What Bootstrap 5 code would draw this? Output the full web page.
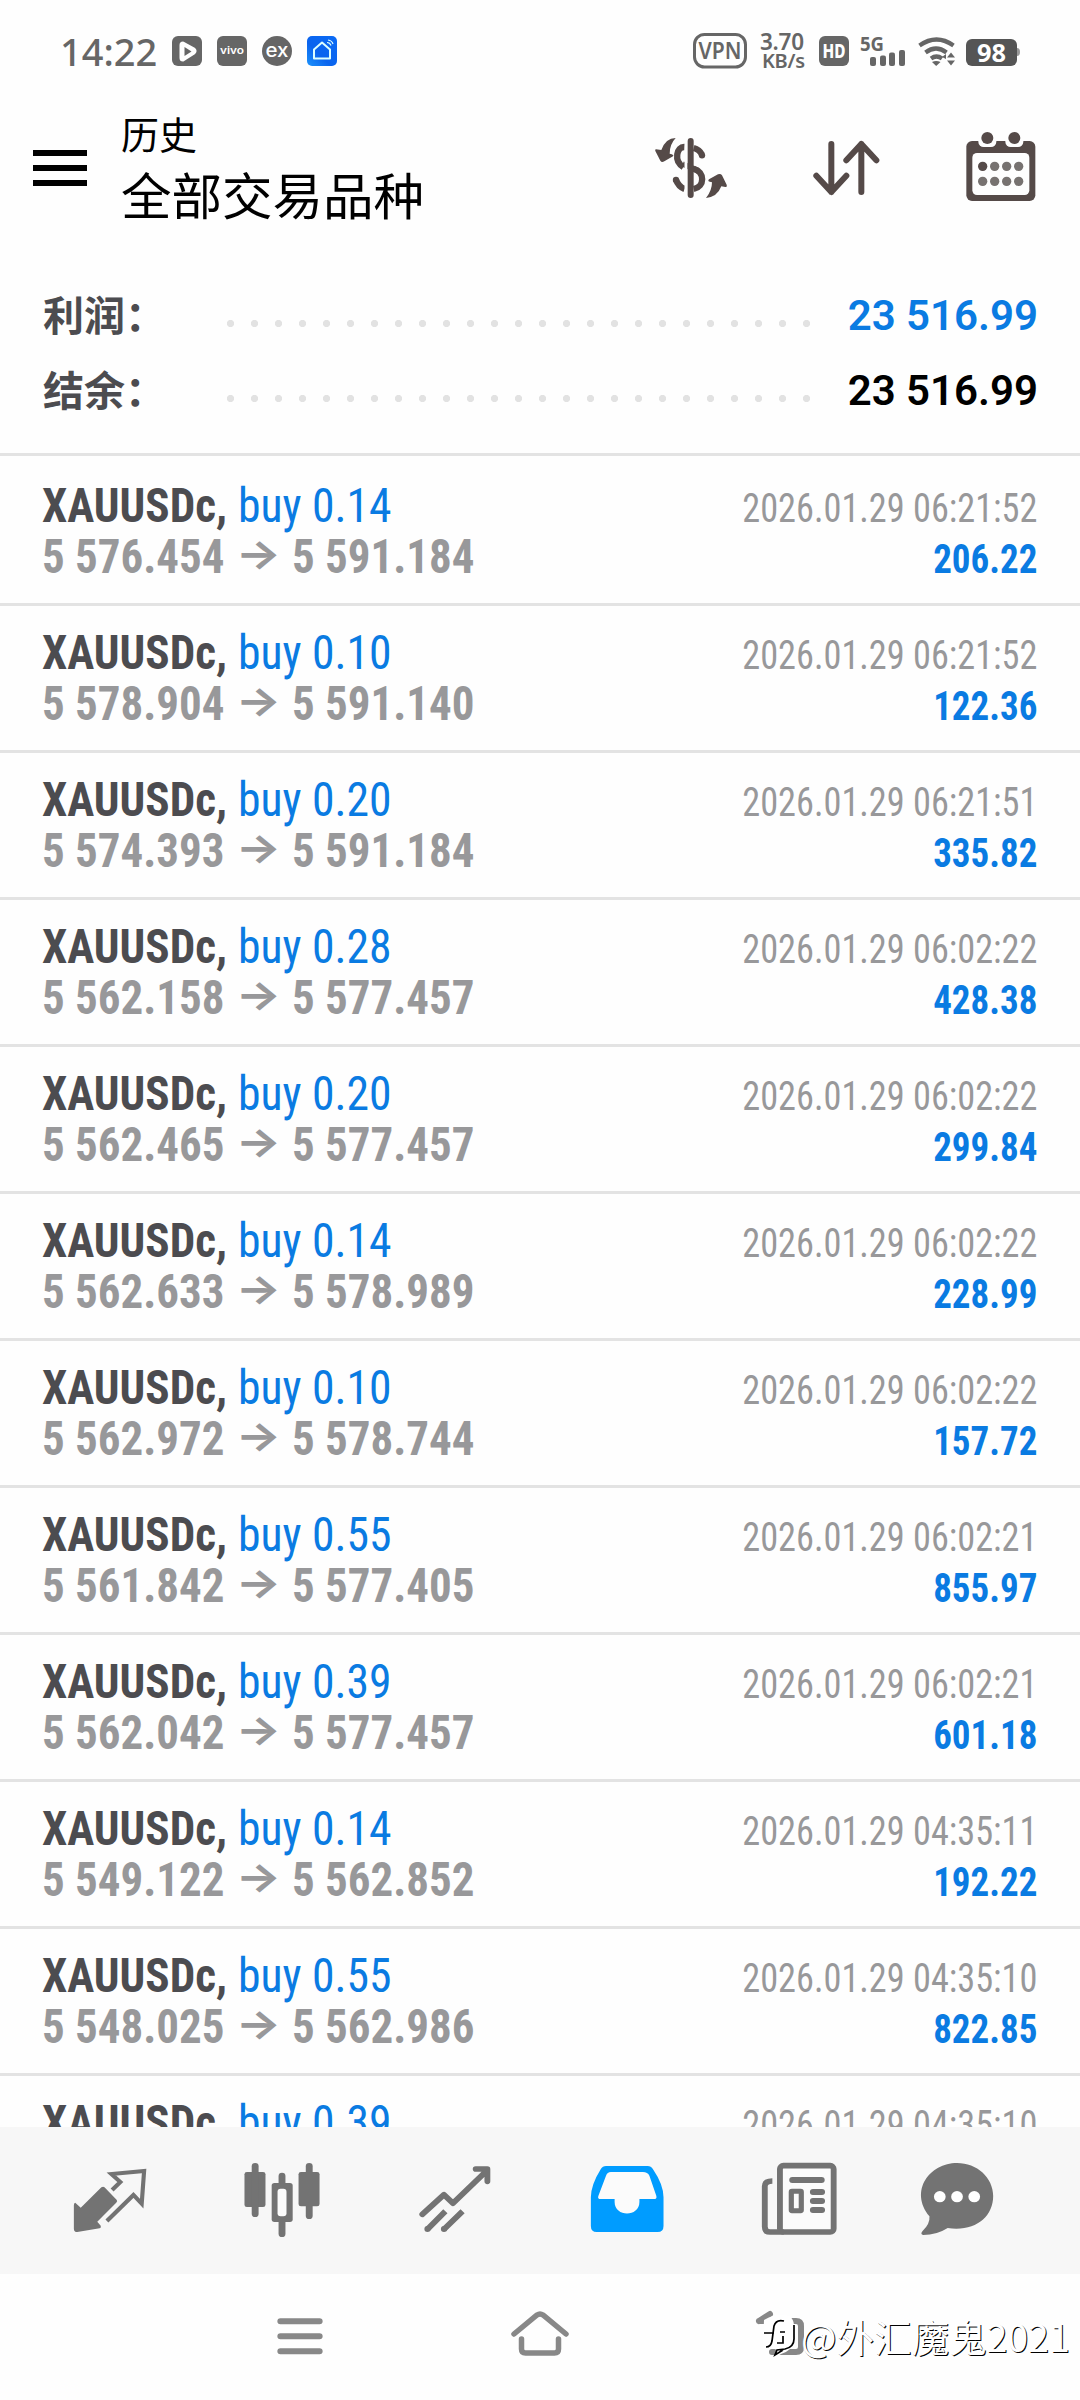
<!DOCTYPE html>
<html lang="zh-CN">
<head>
<meta charset="utf-8">
<meta name="viewport" content="width=device-width, initial-scale=1">
<title>历史</title>
<link rel="stylesheet" href="https://cdn.jsdelivr.net/npm/bootstrap@5.3.0/dist/css/bootstrap.min.css">
<style>
body{width:1080px;height:2400px;overflow:hidden;background:#fefefe;font-family:Roboto,"Noto Sans CJK SC",sans-serif;color:#000}
svg{display:block;flex:none;overflow:visible}
.statusbar{height:100px;padding:2px 60px 0 60px;color:#666}
.clock{font:500 38px/1 "Noto Sans",sans-serif;width:97px;margin-right:15px}
.apphead{height:154px;padding:10px 44px 0 33px}
.burger{width:54px;height:36px;padding:0;border:0;background:none;margin-top:40px}
.burger i{display:block;height:6px;background:#000}
.titles{padding-left:34px}
.t1{font-size:38px;line-height:46px;margin-top:3px}
.t2{font-size:50.5px;line-height:60px;margin-top:9px}
.headicons{gap:86px;padding-top:22px}
.totals{height:202px;padding:24px 42px 0 43px;border-bottom:3px solid #e3e3e3}
.trow{height:75px}
.tlabel{width:184px;font-size:41px;font-weight:700;line-height:75px;color:#4c4c50;padding-top:4px}
.dots{width:584px;height:7px;margin-top:15px;background:radial-gradient(circle at 3.5px 3.5px,#e2e2e2 3.3px,transparent 3.9px) 0 0/24px 7px repeat-x}
.tval{font-size:42px;font-weight:600;line-height:75px}
.deals{height:1671px;padding-top:3px;overflow:hidden}
.deal{height:147px;padding:21px 43px 0 42px;border-bottom:3px solid #e3e3e3;line-height:51px;font-family:"Roboto Condensed",Roboto,sans-serif;font-stretch:75%;white-space:nowrap}
.deal>div>div{height:51px;display:flex}
.deal>div:first-child{font-size:48px}
.deal>div:last-child{font-size:40px;padding-top:3px}
.deal>div:last-child>div{justify-content:flex-end;transform-origin:100% 0}
.sym{font-weight:700;color:#4c4c50;width:196px;transform:scaleX(.94);transform-origin:0 0}
.side,.dval,.tval.up{color:#0a7be2}
.side{transform:scaleX(.95);transform-origin:0 0}
.px{font-weight:700;color:#98989a;transform:scaleX(.937);transform-origin:0 0}
.px i{font:700 40px/46px Inter,sans-serif;width:72px;text-align:center;transform:scaleX(1.28)}
.when{color:#98989a;transform:scaleX(.907)}
.dval{font-weight:700;transform:scaleX(.925)}
.tabs{height:147px;background:#f7f7f7;padding:0 0 2px 72px;gap:96.3px;color:#737373}
.tabs svg:last-child{margin-left:-14px}
.sysnav{height:126px;position:relative;color:#888;padding:0 276px 6px 277px}
.wm{position:absolute;left:760px;top:37px;color:#fff;font:400 37.5px/50px "Noto Sans CJK SC",sans-serif;text-shadow:1px 1px 0 #000;white-space:nowrap}
</style>
<script src="https://cdn.jsdelivr.net/npm/bootstrap@5.3.0/dist/js/bootstrap.bundle.min.js"></script>
</head>
<body>
<div class="statusbar d-flex align-items-center">
  <span class="clock">14:22</span>
  <svg width="165" height="30" viewBox="0 0 165 30"><defs><linearGradient id="hb" x1="0" y1="1" x2="1" y2="0"><stop offset="0" stop-color="#1d93fb"/><stop offset=".4" stop-color="#0a64ee"/><stop offset="1" stop-color="#0a6af5"/></linearGradient></defs>
    <rect width="30" height="30" rx="6" fill="#666"/><path d="M9 9q0-2 2-2l11 6q2 2 0 4l-11 7q-2 0-2-2z" fill="#fff" stroke="#fff" stroke-width="3" stroke-linejoin="round"/><path d="M12.500 11v9l7-4.500z" fill="#666"/>
    <rect x="45" width="30" height="30" rx="6" fill="#666"/><text x="60" y="18" text-anchor="middle" font-family="Inter" font-size="10" font-weight="600" fill="#fff" textLength="24" lengthAdjust="spacingAndGlyphs">vivo</text>
    <circle cx="105" cy="15" r="15" fill="#666"/><text x="105" y="20.500" text-anchor="middle" font-family="Inter" font-size="19" font-weight="500" fill="#fff" textLength="23" lengthAdjust="spacingAndGlyphs">ex</text>
    <rect x="135" width="30" height="30" rx="5" fill="url(#hb)"/><path d="M142 13.500l8-7 8 7v9h-16z" fill="none" stroke="#dff" stroke-width="2" stroke-linejoin="round"/><path d="M155 6.500q3 0 4 3M156 4q4 .5 5 4" fill="none" stroke="#dff" stroke-width="1.200"/></svg>
  <svg class="ms-auto" width="65" height="36" viewBox="0 0 65 36"><rect x="1.500" y="1.500" width="51" height="32.500" rx="10" fill="none" stroke="#666" stroke-width="3"/><text x="27" y="26" text-anchor="middle" font-family="Noto Sans" font-size="22.500" font-weight="600" fill="#666" textLength="43" lengthAdjust="spacingAndGlyphs">VPN</text></svg>
  <svg width="262" height="60" viewBox="758 21 262 60" fill="#666" font-family="Noto Sans" font-weight="600">
    <text x="760" y="49.500" font-size="22.500" textLength="44">3.70</text><text x="762" y="67.500" font-size="20" textLength="43">KB/s</text>
    <rect x="819" y="36" width="30" height="30" rx="6"/><text x="834" y="58" text-anchor="middle" font-size="19" font-weight="800" fill="#fff" textLength="23" lengthAdjust="spacingAndGlyphs">HD</text>
    <text x="860" y="50.500" font-size="19" font-weight="700" textLength="24" lengthAdjust="spacingAndGlyphs">5G</text>
    <rect x="870" y="57" width="6" height="9" rx="2"/><rect x="880" y="55.500" width="6" height="10.500" rx="2"/><rect x="889" y="52.500" width="6" height="13.500" rx="2"/><rect x="899" y="50" width="6" height="16" rx="2"/>
    <g fill="none" stroke="#666" stroke-width="4.200"><path d="M919.500 45.500q17-12 34 0M925.500 52.500q10.500-8 21 0M931 58.500q5.500-4 11 0"/></g><path d="M932 62q4-2 8.500 0l-4.300 4zM947 57.500l4-5 4 5zM947 60.500l4 5 4-5zM942 57l4-3v5z"/>
    <rect x="966" y="39" width="51" height="27" rx="6" fill="#555"/><path d="M1017 48q3 0 3 4t-3 4z" fill="#999"/><text x="991.500" y="61.500" text-anchor="middle" font-size="25" font-weight="700" fill="#fff" textLength="29" lengthAdjust="spacingAndGlyphs">98</text>
  </svg>
</div>

<header class="apphead d-flex">
  <button class="burger d-flex flex-column justify-content-between" aria-label="菜单"><i class="w-100"></i><i class="w-100"></i><i class="w-100"></i></button>
  <div class="titles flex-grow-1"><div class="t1">历史</div><div class="t2">全部交易品种</div></div>
  <div class="headicons d-flex">
    <svg width="73" height="69" viewBox="100 66 219 207"><path d="M192 111c-24-2-34 42-4 60M219 114c12 3 20 10 25 20M166 209c4 12 12 22 26 28M219 176c34 10 34 54 0 61" fill="none" stroke="#554a48" stroke-width="19"/><path d="M186 162l46 20" stroke="#554a48" stroke-width="17"/><circle cx="244" cy="136" r="9.500" fill="#554a48"/><circle cx="166" cy="210" r="9.500" fill="#554a48"/><path d="M196 84v180" stroke="#fefefe" stroke-width="9"/><path d="M210 93v162" stroke="#554a48" stroke-width="18" stroke-linecap="round"/><path d="M165 84q-30 0-43 36l-16-2q-4 0-2 5l15 29q4 7 12 2l26-15q5-5-10-8 0-28 18-47zM256 264q18-22 18-47-16-2-9-9l27-15q8-3 12 3l14 28q2 7-4 7l-12-2q-12 32-46 35z" fill="#554a48"/></svg>
    <svg width="67" height="69" viewBox="578 66 201 207"><path d="M633 102v144M588 197l45 49 45-49M723 246V102M678 151l45-49 45 49" fill="none" stroke="#554a48" stroke-width="18" stroke-linecap="round" stroke-linejoin="round"/></svg>
    <svg width="70" height="69" viewBox="1037 66 210 207"><rect x="1038" y="93" width="207" height="180" rx="17" fill="#554a48"/><rect x="1056" y="129" width="171" height="126" rx="14" fill="#fefefe"/><g fill="#fefefe"><rect x="1074" y="66" width="54" height="45" rx="16"/><rect x="1155" y="66" width="54" height="45" rx="16"/></g><g fill="#554a48"><circle cx="1101" cy="84" r="18"/><circle cx="1182" cy="84" r="18"/><circle cx="1087" cy="169" r="14"/></g><g fill="#777270"><circle cx="1123" cy="169" r="14"/><circle cx="1159" cy="169" r="14"/><circle cx="1195" cy="169" r="14"/><circle cx="1087" cy="214" r="14"/><circle cx="1123" cy="214" r="14"/><circle cx="1159" cy="214" r="14"/><circle cx="1195" cy="214" r="14"/></g></svg>
  </div>
</header>

<section class="totals">
  <div class="trow d-flex align-items-center"><div class="tlabel">利润：</div><div class="dots"></div><div class="tval up ms-auto">23 516.99</div></div>
  <div class="trow d-flex align-items-center"><div class="tlabel">结余：</div><div class="dots"></div><div class="tval ms-auto">23 516.99</div></div>
</section>

<main class="deals">
  <div class="deal d-flex justify-content-between"><div><div><span class="sym">XAUUSDc,</span><span class="side">buy 0.14</span></div><div class="px">5 576.454<i>→</i>5 591.184</div></div><div><div class="when">2026.01.29 06:21:52</div><div class="dval">206.22</div></div></div>
  <div class="deal d-flex justify-content-between"><div><div><span class="sym">XAUUSDc,</span><span class="side">buy 0.10</span></div><div class="px">5 578.904<i>→</i>5 591.140</div></div><div><div class="when">2026.01.29 06:21:52</div><div class="dval">122.36</div></div></div>
  <div class="deal d-flex justify-content-between"><div><div><span class="sym">XAUUSDc,</span><span class="side">buy 0.20</span></div><div class="px">5 574.393<i>→</i>5 591.184</div></div><div><div class="when">2026.01.29 06:21:51</div><div class="dval">335.82</div></div></div>
  <div class="deal d-flex justify-content-between"><div><div><span class="sym">XAUUSDc,</span><span class="side">buy 0.28</span></div><div class="px">5 562.158<i>→</i>5 577.457</div></div><div><div class="when">2026.01.29 06:02:22</div><div class="dval">428.38</div></div></div>
  <div class="deal d-flex justify-content-between"><div><div><span class="sym">XAUUSDc,</span><span class="side">buy 0.20</span></div><div class="px">5 562.465<i>→</i>5 577.457</div></div><div><div class="when">2026.01.29 06:02:22</div><div class="dval">299.84</div></div></div>
  <div class="deal d-flex justify-content-between"><div><div><span class="sym">XAUUSDc,</span><span class="side">buy 0.14</span></div><div class="px">5 562.633<i>→</i>5 578.989</div></div><div><div class="when">2026.01.29 06:02:22</div><div class="dval">228.99</div></div></div>
  <div class="deal d-flex justify-content-between"><div><div><span class="sym">XAUUSDc,</span><span class="side">buy 0.10</span></div><div class="px">5 562.972<i>→</i>5 578.744</div></div><div><div class="when">2026.01.29 06:02:22</div><div class="dval">157.72</div></div></div>
  <div class="deal d-flex justify-content-between"><div><div><span class="sym">XAUUSDc,</span><span class="side">buy 0.55</span></div><div class="px">5 561.842<i>→</i>5 577.405</div></div><div><div class="when">2026.01.29 06:02:21</div><div class="dval">855.97</div></div></div>
  <div class="deal d-flex justify-content-between"><div><div><span class="sym">XAUUSDc,</span><span class="side">buy 0.39</span></div><div class="px">5 562.042<i>→</i>5 577.457</div></div><div><div class="when">2026.01.29 06:02:21</div><div class="dval">601.18</div></div></div>
  <div class="deal d-flex justify-content-between"><div><div><span class="sym">XAUUSDc,</span><span class="side">buy 0.14</span></div><div class="px">5 549.122<i>→</i>5 562.852</div></div><div><div class="when">2026.01.29 04:35:11</div><div class="dval">192.22</div></div></div>
  <div class="deal d-flex justify-content-between"><div><div><span class="sym">XAUUSDc,</span><span class="side">buy 0.55</span></div><div class="px">5 548.025<i>→</i>5 562.986</div></div><div><div class="when">2026.01.29 04:35:10</div><div class="dval">822.85</div></div></div>
  <div class="deal d-flex justify-content-between"><div><div><span class="sym">XAUUSDc,</span><span class="side">buy 0.39</span></div></div><div><div class="when">2026.01.29 04:35:10</div></div></div>
</main>

<nav class="tabs d-flex align-items-center">
  <svg width="76" height="76" viewBox="209.600 336 220.700 228" preserveAspectRatio="none"><path d="M219 458l16 15 60-61q5-4 9 0l35 37q4 5-1 9l-55 57 10 12q2 7-3 8l-65 11q-10 0-10-10v-70q0-8 4-8z" fill="currentColor"/><path d="M326 420l24-24-26-24 95-9-7 98-24-26-77 78" fill="none" stroke="currentColor" stroke-width="12"/></svg>
  <svg width="76" height="76" viewBox="706.600 336 220.700 228" preserveAspectRatio="none"><g fill="currentColor"><rect x="708" y="366" width="61" height="105" rx="7"/><rect x="865" y="366" width="61" height="103" rx="7"/><rect x="729" y="339" width="20" height="162" rx="10"/><rect x="886" y="339" width="20" height="168" rx="10"/><rect x="807" y="368" width="20" height="40" rx="10"/><rect x="807" y="505" width="20" height="56" rx="10"/><rect x="787" y="399" width="61" height="117" rx="8"/></g><rect x="804" y="416" width="26" height="83" rx="9" fill="#fbfbfb"/></svg>
  <svg width="76" height="76" viewBox="1206.600 336 220.700 228" preserveAspectRatio="none"><g fill="none" stroke="currentColor" stroke-width="17" stroke-linecap="round" stroke-linejoin="round"><path d="M1222 493l63-59 26 26 98-98M1377 357h34v37"/></g><path d="M1237 538l52-54M1285 538l54-54" stroke="currentColor" stroke-width="17" stroke-linecap="butt"/><circle cx="1237" cy="537" r="9" fill="currentColor"/><circle cx="1285" cy="537" r="9" fill="currentColor"/></svg>
  <svg width="76" height="76" viewBox="140.600 336 220.700 228" preserveAspectRatio="none"><path d="M190 348h121q10 0 15 9 31 47 31 85v86q0 18-17 18H163q-17 0-17-18v-86q0-37 29-85 5-9 15-9z" fill="#009cff"/><path d="M204 366h93q14 0 19 11l20 60q3 10-7 10h-42v9c0 46-72 46-72 0v-9h-40q-11 0-7-10l22-60q4-11 14-11z" fill="#fbfbfb"/></svg>
  <svg width="76" height="76" viewBox="644 336 220.700 228" preserveAspectRatio="none"><rect x="699" y="347" width="156" height="199" rx="10" fill="#fbfbfb" stroke="currentColor" stroke-width="17"/><path d="M677 393q-22 0-22 16v121q0 16 15 16h40" fill="none" stroke="currentColor" stroke-width="17"/><g stroke="currentColor" stroke-width="18" stroke-linecap="round"><path d="M735 390h85M795 426h26M795 453h26M795 480h26"/></g><rect x="732" y="424" width="29" height="58" rx="2" fill="none" stroke="currentColor" stroke-width="15"/></svg>
  <svg width="76" height="76" viewBox="1102.600 336 220.700 228" preserveAspectRatio="none"><path d="M1213 339c58 0 105 44 105 99 0 64-54 108-132 96q-32 21-71 21-10-3-2-12 22-21 20-44c-60-76 0-160 80-160z" fill="currentColor"/><g fill="#fff"><circle cx="1163" cy="440" r="17"/><circle cx="1213" cy="440" r="17"/><circle cx="1263" cy="440" r="17"/></g></svg>
</nav>

<nav class="sysnav d-flex align-items-center justify-content-between">
  <svg width="46" height="46" viewBox="804 785 133 138" preserveAspectRatio="none"><path d="M814 816h113M814 861h113M814 906h113" stroke="currentColor" stroke-width="18" stroke-linecap="round"/></svg>
  <svg width="58" height="46" viewBox="0 0 58 46"><path d="M3 23L26 4q3-2 6 0l23 19M10.500 28v10q0 4 4 4h29q4 0 4-4V28" fill="none" stroke="currentColor" stroke-width="5.500" stroke-linecap="round"/></svg>
  <svg width="48" height="46" viewBox="0 0 48 46"><path d="M3 10l11-7M3 10h37q5 0 5 5v21q0 5-5 5H16" fill="none" stroke="currentColor" stroke-width="6" stroke-linecap="round"/></svg>
  <div class="wm d-flex"><svg width="41" height="50" viewBox="0 0 41 50"><path d="M4 9q10-6 20-5 10 0 10 12v14q-1 9-13 13l-5 3 1-7-14-6z" fill="#fff"/><path d="M24 10q-8-2-10 5l-2 15q-1 6-6 6M4 22h10M20 21h5M23 25v7h-6M34 14v14q0 8-9 10l-8 1-2 5 8-5" fill="none" stroke="#000" stroke-width="1.700"/></svg><span>@外汇魔鬼2021</span></div>
</nav>
</body>
</html>
